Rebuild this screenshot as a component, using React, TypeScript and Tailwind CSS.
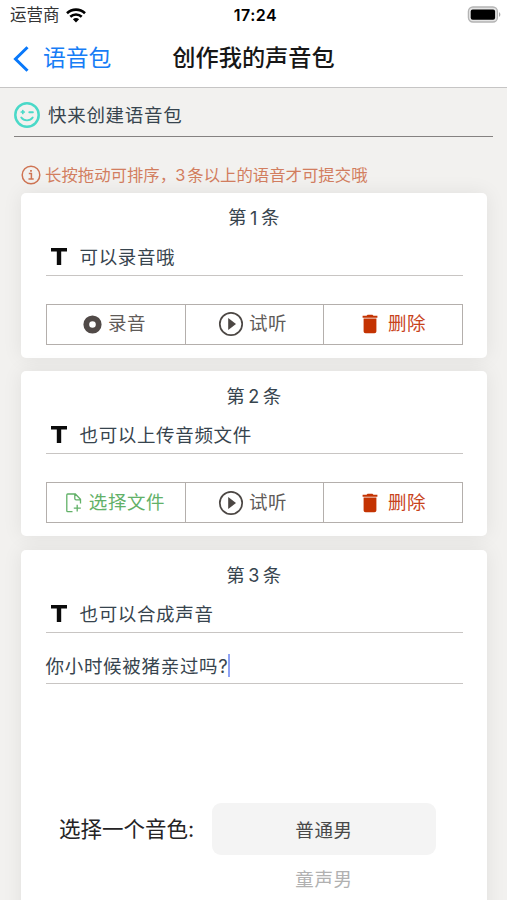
import type { ReactNode } from "react";

const RecordIcon = () => (
  <svg className="h-[19px] w-[19px]" viewBox="0 0 19 19">
    <circle cx="9.5" cy="9.5" r="6.2" fill="none" stroke="#514a48" strokeWidth="5.8" />
  </svg>
);

const PlayIcon = () => (
  <svg className="h-[26px] w-[26px]" viewBox="0 0 26 26">
    <circle cx="13" cy="13" r="11.2" fill="none" stroke="#4c4744" strokeWidth="1.7" />
    <path d="M10.2 6.9 18 13l-7.8 6.1z" fill="#4c4744" />
  </svg>
);

const TrashIcon = () => (
  <svg className="h-5 w-4" viewBox="0 0 16 20" fill="#c43302">
    <path d="M.6 1.7h3.9L5.6.7h4.8l1.1 1h3.9v2H.6zM1.6 4.4h12.8v12.8c0 1.2-.8 2-2 2H3.6c-1.2 0-2-.8-2-2z" />
  </svg>
);

const FileAddIcon = () => (
  <svg className="h-5 w-4" viewBox="0 0 16 20" fill="none" stroke="#62b168" strokeWidth="1.3">
    <path d="M6.5 18.6H1.7c-.5 0-.9-.4-.9-.9V1.9c0-.5.4-.9.9-.9h7.6l5.2 5.3v4.2M8.8 1v4.5c0 .8.6 1.3 1.3 1.3h4.4M11.2 11.8v6.8M7.8 15.2h7" />
  </svg>
);

const TextIcon = () => (
  <svg className="h-[17px] w-4" viewBox="0 0 16 17" fill="#0b0b0b">
    <path d="M0 0h16v3.6H10.2V17H5.8V3.6H0z" />
  </svg>
);

const SmileIcon = () => (
  <svg className="h-[26px] w-[26px]" viewBox="0 0 26 26" fill="none" stroke="#4ad9c8" strokeLinecap="round">
    <circle cx="13" cy="13" r="11.7" strokeWidth="2.5" />
    <path d="M7.3 15.5c2.6 3.8 8.8 3.8 11.4 0M15.3 10.2h3.6" strokeWidth="1.9" />
    <path d="M7.3 10h3M8.8 8.5v3" strokeWidth="1.7" />
  </svg>
);

const InfoIcon = () => (
  <svg className="h-5 w-5" viewBox="0 0 20 20" fill="none" stroke="#cf7453">
    <circle cx="10" cy="10" r="8.8" strokeWidth="1.5" />
    <path d="M7.8 8.4h2.6v5.3M7.5 14h5.2" strokeWidth="1.5" />
    <path d="M9.1 5.8h1.8" strokeWidth="1.7" />
  </svg>
);

const WifiIcon = () => (
  <svg className="h-[15px] w-5" viewBox="0 0 20 15" fill="none" stroke="#000" strokeWidth="2.6">
    <path d="M1 5.3c5.1-4.9 12.9-4.9 18 0M4.3 8.7c3.2-3 8.2-3 11.4 0" />
    <path d="M10 14.4 6.9 11.3c1.7-1.6 4.5-1.6 6.2 0z" fill="#000" stroke="none" />
  </svg>
);

const BatteryIcon = () => (
  <svg className="h-[17px] w-[34px]" viewBox="0 0 34 17">
    <rect x="1.4" y="1" width="29" height="15" rx="4.5" fill="#e4e4e4" stroke="#b4b4b4" strokeWidth="1.3" />
    <rect x="3.7" y="3.4" width="24.4" height="10.4" rx="2" fill="#000" />
    <path d="M32 6.2c1.8.6 1.8 4 0 4.6z" fill="#aaa" />
  </svg>
);

type Action = { icon: ReactNode; label: string; className: string };

const record: Action = { icon: <RecordIcon />, label: "录音", className: "gap-[6px] pr-[2px] text-[#5f5b59]" };
const choose: Action = { icon: <FileAddIcon />, label: "选择文件", className: "gap-[7px] text-[#62b168]" };

function Actions({ first }: { first: Action }) {
  const actions: Action[] = [
    first,
    { icon: <PlayIcon />, label: "试听", className: "gap-[5px] pr-[3px] text-[#5f5b59]" },
    { icon: <TrashIcon />, label: "删除", className: "gap-[10px] pl-[3px] text-[#c8431b]" },
  ];
  return (
    <div className="mt-7 grid h-[41px] grid-cols-[139px_138px_1fr] divide-x divide-[#b4afac] border border-[#b4afac]">
      {actions.map((action) => (
        <div key={action.label} className={`flex items-center justify-center ${action.className}`}>
          {action.icon}
          <span className="tracking-[0.6px]">{action.label}</span>
        </div>
      ))}
    </div>
  );
}

function Card({ index, title, className, children }: { index: number; title: string; className: string; children: ReactNode }) {
  return (
    <section
      className={`rounded-[5px] bg-white px-[24.5px] text-[18.5px] text-[#37444e] shadow-[0_0_20px_rgba(0,0,0,0.075)] ${className}`}
    >
      <h2 className="flex h-[51px] items-center justify-center gap-[3px] tracking-[0.5px]">
        <span>第</span>
        <span className="font-[Inter] text-[18px]">{index}</span>
        <span>条</span>
      </h2>
      <div className="flex h-8 items-start gap-[13px] border-b border-[#c8c5c3] pl-[5px]">
        <span className="mt-[4px]">
          <TextIcon />
        </span>
        <span className="leading-[27px] tracking-[0.65px]">{title}</span>
      </div>
      {children}
    </section>
  );
}

export default function App() {
  return (
    <div className="h-[900px] w-[507px] overflow-hidden bg-[#f2f1ef] font-['Inter','Noto_Sans_CJK_SC',sans-serif]">
      <header className="h-[88px] border-b border-[#c6c5c5] bg-white">
        <div className="grid h-[30px] grid-cols-3 items-center pr-[6px] pl-[10px]">
          <div className="flex items-center gap-[6px] text-[16.5px] text-[#333]">
            <span>运营商</span>
            <WifiIcon />
          </div>
          <span className="text-center text-[16px] font-semibold tracking-[0.5px]">17:24</span>
          <div className="-mt-[2px] flex justify-end">
            <BatteryIcon />
          </div>
        </div>
        <div className="grid h-[57px] grid-cols-[1fr_auto_1fr] items-center px-[13px]">
          <div className="flex items-center gap-[14px] text-[22.8px] text-[#177df6]">
            <svg className="h-[26px] w-4" viewBox="0 0 16 26" fill="none" stroke="#0878fa" strokeWidth="3">
              <path d="M14.5 1.3 2.5 13l12 11.7" />
            </svg>
            <span>语音包</span>
          </div>
          <h1 className="text-[23.2px] font-medium text-[#171717]">创作我的声音包</h1>
        </div>
      </header>

      <div className="mx-[14px] flex h-[49px] items-center gap-[8px] border-b-[1.5px] border-[#858281] text-[18.5px] text-[#37444e]">
        <span className="mt-[5px]">
          <SmileIcon />
        </span>
        <span className="mt-[7px] tracking-[0.7px]">快来创建语音包</span>
      </div>

      <div className="mt-[25px] ml-[21px] flex h-[26px] items-center gap-[4px] text-[16.4px] text-[#d27e60]">
        <InfoIcon />
        <span>
          长按拖动可排序，<span className="mr-[2px] -ml-px">3</span>条以上的语音才可提交哦
        </span>
      </div>

      <main className="mr-[20px] ml-[21px] mt-[4.5px] flex flex-col gap-[13.7px]">
        <Card index={1} title="可以录音哦" className="h-[165px]">
          <Actions first={record} />
        </Card>
        <Card index={2} title="也可以上传音频文件" className="h-[165px]">
          <Actions first={choose} />
        </Card>
        <Card index={3} title="也可以合成声音" className="h-[400px]">
          <div className="mt-5 flex h-[31px] items-start border-b border-[#c8c5c3]">
            <span className="leading-[27px] tracking-[0.7px]">你小时候被猪亲过吗?</span>
            <span className="mt-[1px] h-[23px] w-[2px] bg-[#8fa2f4]" />
          </div>
          <div className="mt-[119px] flex items-start gap-[17px] pl-[13.5px]">
            <span className="w-[136px] text-[21.5px] leading-[52px] whitespace-nowrap text-[#252325]">选择一个音色:</span>
            <div className="w-[224px] text-center text-[18.5px] tracking-[0.6px]">
              <div className="h-[52px] rounded-[9px] bg-[#f4f4f4] leading-[54px] text-[#484848]">普通男</div>
              <div className="leading-[48px] text-[#b1b1b1]">童声男</div>
            </div>
          </div>
        </Card>
      </main>
    </div>
  );
}
